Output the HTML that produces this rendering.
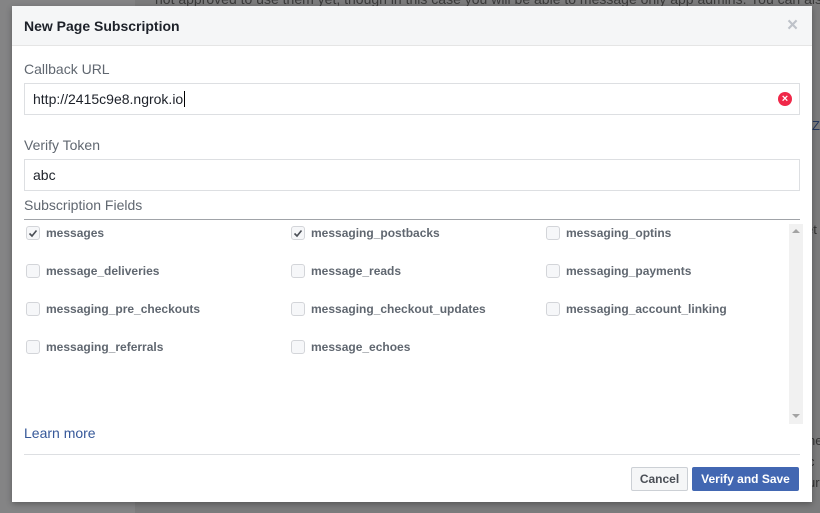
<!DOCTYPE html>
<html><head><meta charset="utf-8"><style>
*{margin:0;padding:0;box-sizing:border-box}
body{width:820px;height:513px;overflow:hidden;position:relative;background:#7b7b7c;font-family:"Liberation Sans",sans-serif}
.a{position:absolute}
.cb{position:absolute;width:14px;height:14px;border:1px solid #d3d5d9;border-radius:3px;background:#f6f7f9}
.lb{position:absolute;font-size:12px;font-weight:bold;color:#606770;line-height:14px}
.inp{position:absolute;left:24px;width:776px;height:32px;border:1px solid #dddfe2;background:#fff;font-size:14px;color:#1d2129;padding-left:8px;line-height:30px}
.lab{position:absolute;left:24px;font-size:14px;color:#606770}
</style></head><body>
<div class="a" style="left:0;top:0;width:135px;height:513px;background:#848485"></div>
<div class="a" style="left:155px;top:-9px;font-size:14px;color:#3a3a3a;white-space:nowrap">not approved to use them yet, though in this case you will be able to message only app admins. You can als</div>
<div class="a" style="left:812px;top:118px;font-size:13px;color:#23375e">ZE</div>
<div class="a" style="left:806px;top:222px;font-size:13px;color:#333">et</div>
<div class="a" style="left:808px;top:430px;font-size:13px;color:#333;line-height:21px">ne<br>c<br>ur</div>
<div class="a" style="left:12px;top:6px;width:800px;height:496px;background:#fff;box-shadow:0 2px 6px rgba(0,0,0,.3)">
 <div class="a" style="left:0;top:0;width:800px;height:40px;background:#f5f6f7;border-bottom:1px solid #e5e5e5"></div>
 <div class="a" style="left:12px;top:12px;font-size:14px;font-weight:bold;color:#1d2129">New Page Subscription</div>
 <div class="a" style="left:775px;top:9px;font-size:19px;color:#bec2c9;font-weight:bold">×</div>
</div>
<div class="lab" style="top:61px">Callback URL</div>
<div class="inp" style="top:83px">http://2415c9e8.ngrok.io<span style="border-left:1px solid #000;margin-left:1px"></span></div>
<div class="a" style="left:778px;top:92px;width:14px;height:14px;border-radius:7px;background:#f02849;color:#fff;font-size:11px;font-weight:bold;text-align:center;line-height:14px">×</div>
<div class="lab" style="top:137px">Verify Token</div>
<div class="inp" style="top:159px">abc</div>
<div class="lab" style="top:197px">Subscription Fields</div>
<div class="a" style="left:24px;top:219px;width:776px;height:1px;background:#a0a3a8"></div>
<div class="a" style="left:789px;top:224px;width:14px;height:200px;background:#f1f1f1"></div>
<div class="a" style="left:792px;top:229px;width:0;height:0;border-left:4px solid transparent;border-right:4px solid transparent;border-bottom:4px solid #a3a3a3"></div>
<div class="a" style="left:792px;top:414px;width:0;height:0;border-left:4px solid transparent;border-right:4px solid transparent;border-top:4px solid #a3a3a3"></div>

<div class="cb" style="left:26px;top:226px"><svg width="12" height="12" style="position:absolute;left:0;top:0"><path d="M2.5 6.5 L5 9 L9.5 3.5" stroke="#4b4f56" stroke-width="1.6" fill="none"/></svg></div><div class="lb" style="left:46px;top:226px">messages</div>
<div class="cb" style="left:291px;top:226px"><svg width="12" height="12" style="position:absolute;left:0;top:0"><path d="M2.5 6.5 L5 9 L9.5 3.5" stroke="#4b4f56" stroke-width="1.6" fill="none"/></svg></div><div class="lb" style="left:311px;top:226px">messaging_postbacks</div>
<div class="cb" style="left:546px;top:226px"></div><div class="lb" style="left:566px;top:226px">messaging_optins</div>

<div class="cb" style="left:26px;top:264px"></div><div class="lb" style="left:46px;top:264px">message_deliveries</div>
<div class="cb" style="left:291px;top:264px"></div><div class="lb" style="left:311px;top:264px">message_reads</div>
<div class="cb" style="left:546px;top:264px"></div><div class="lb" style="left:566px;top:264px">messaging_payments</div>

<div class="cb" style="left:26px;top:302px"></div><div class="lb" style="left:46px;top:302px">messaging_pre_checkouts</div>
<div class="cb" style="left:291px;top:302px"></div><div class="lb" style="left:311px;top:302px">messaging_checkout_updates</div>
<div class="cb" style="left:546px;top:302px"></div><div class="lb" style="left:566px;top:302px">messaging_account_linking</div>

<div class="cb" style="left:26px;top:340px"></div><div class="lb" style="left:46px;top:340px">messaging_referrals</div>
<div class="cb" style="left:291px;top:340px"></div><div class="lb" style="left:311px;top:340px">message_echoes</div>

<div class="a" style="left:24px;top:425px;font-size:14px;color:#365899">Learn more</div>
<div class="a" style="left:24px;top:454px;width:776px;height:1px;background:#dddfe2"></div>
<div class="a" style="left:631px;top:467px;width:57px;height:24px;background:#f5f6f7;border:1px solid #ccd0d5;border-radius:2px;font-size:12px;font-weight:bold;color:#4b4f56;text-align:center;line-height:22px">Cancel</div>
<div class="a" style="left:692px;top:467px;width:107px;height:24px;background:#4267b2;border:1px solid #4267b2;border-radius:2px;font-size:12px;font-weight:bold;color:#fff;text-align:center;line-height:22px">Verify and Save</div>
</body></html>
